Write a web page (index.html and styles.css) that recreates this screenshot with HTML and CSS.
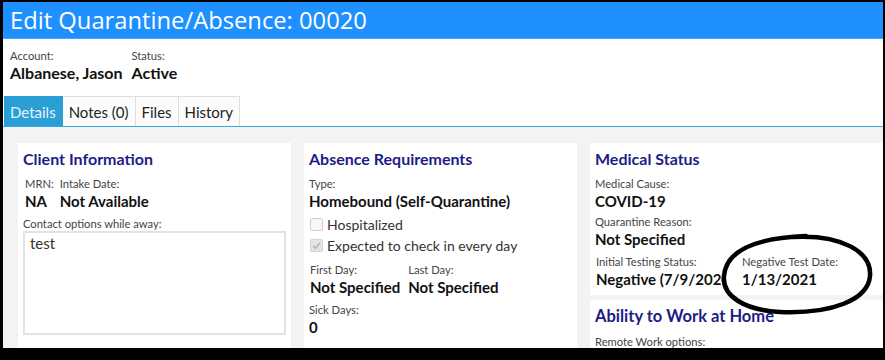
FILE: index.html
```html
<!DOCTYPE html>
<html lang="en">
<head>
    <meta charset="UTF-8">
    <meta name="viewport" content="width=device-width, initial-scale=1.0">
    <title>Edit Quarantine/Absence</title>
    <link rel="stylesheet" href="styles.css">
</head>
<body>
    <div class="window">
        <div class="title-bar">Edit Quarantine/Absence: 00020</div>

        <div class="summary">
            <div class="field">
                <div class="label">Account:</div>
                <div class="value">Albanese, Jason</div>
            </div>
            <div class="field">
                <div class="label">Status:</div>
                <div class="value">Active</div>
            </div>
        </div>

        <div class="tabs">
            <div class="tab active">Details</div>
            <div class="tab">Notes (0)</div>
            <div class="tab">Files</div>
            <div class="tab">History</div>
        </div>

        <div class="content">
            <div class="panel">
                <h3>Client Information</h3>
                <div class="pair small-gap">
                    <div class="field">
                        <div class="label">MRN:</div>
                        <div class="value">NA</div>
                    </div>
                    <div class="field">
                        <div class="label">Intake Date:</div>
                        <div class="value">Not Available</div>
                    </div>
                </div>
                <div class="label contact-label">Contact options while away:</div>
                <div class="textbox">test</div>
            </div>

            <div class="panel">
                <h3>Absence Requirements</h3>
                <div class="field">
                    <div class="label">Type:</div>
                    <div class="value">Homebound (Self-Quarantine)</div>
                </div>
                <div class="checks">
                    <div class="check"><span class="box"></span>Hospitalized</div>
                    <div class="check">
                        <span class="box on">
                            <svg width="11" height="11" viewBox="0 0 11 11"><path d="M2 5.8 L4.4 8.2 L9 2.8" fill="none" stroke="#b5b5b5" stroke-width="1.6"/></svg>
                        </span>Expected to check in every day
                    </div>
                </div>
                <div class="pair days">
                    <div class="field">
                        <div class="label">First Day:</div>
                        <div class="value">Not Specified</div>
                    </div>
                    <div class="field">
                        <div class="label">Last Day:</div>
                        <div class="value">Not Specified</div>
                    </div>
                </div>
                <div class="field sick">
                    <div class="label">Sick Days:</div>
                    <div class="value">0</div>
                </div>
            </div>

            <div class="stack">
                <div class="panel">
                    <h3>Medical Status</h3>
                    <div class="field">
                        <div class="label">Medical Cause:</div>
                        <div class="value">COVID-19</div>
                    </div>
                    <div class="field spaced">
                        <div class="label">Quarantine Reason:</div>
                        <div class="value">Not Specified</div>
                    </div>
                    <div class="pair testing">
                        <div class="field clip">
                            <div class="label">Initial Testing Status:</div>
                            <div class="value">Negative (7/9/2020)</div>
                        </div>
                        <div class="field">
                            <div class="label">Negative Test Date:</div>
                            <div class="value">1/13/2021</div>
                        </div>
                    </div>
                </div>
                <div class="panel">
                    <h3 class="big">Ability to Work at Home</h3>
                    <div class="label">Remote Work options:</div>
                </div>
            </div>
        </div>

        <!-- hand drawn circle around the test date -->
        <svg class="annotation" viewBox="3 2 880 346" width="880" height="346">
            <path d="M792 237 C842 234 872 252 870 276 C868 300 832 314 780 312 C744 310 722 296 724 276 C726 252 752 238 806 236"
                  fill="none" stroke="#000" stroke-width="4.5" stroke-linecap="round"/>
        </svg>
    </div>
</body>
</html>
```

FILE: styles.css
```css
body {
    margin: 0;
    background: #000;
    font-family: Lato, "Open Sans", Arial, sans-serif;
    color: #111;
}

.window {
    position: relative;
    display: flex;
    flex-direction: column;
    margin: 2px 2px 0 3px;
    height: 346px;
    background: #fff;
    overflow: hidden;
}

.title-bar {
    flex-shrink: 0;
    height: 36px;
    line-height: 36px;
    padding-left: 7px;
    background: #1e90ff;
    border-bottom: 1px solid #4aa6ff;
    color: #fff;
    font-family: "Open Sans", Arial, sans-serif;
    font-size: 23.75px;
    white-space: nowrap;
}

.summary {
    flex-shrink: 0;
    display: flex;
    gap: 9px;
    height: 57px;
    box-sizing: border-box;
    padding: 10px 0 0 7px;
}

.summary .value {
    font-size: 16px;
}

.label {
    font-size: 11.2px;
    line-height: 14px;
    color: #444;
    white-space: nowrap;
}

.value {
    font-size: 15px;
    line-height: 20px;
    font-weight: 700;
    color: #111;
    white-space: nowrap;
}

.tabs {
    flex-shrink: 0;
    display: flex;
    padding-left: 1px;
    border-bottom: 1px solid #3aa6e0;
}

.tab {
    height: 30px;
    line-height: 30px;
    padding: 0 6px;
    box-sizing: border-box;
    font-size: 15px;
    color: #222;
    background: #fcfcfc;
    border: 1px solid #dedede;
    border-bottom: none;
    border-left: none;
}

.tab.active {
    background: #2a9fd6;
    border-color: #2a9fd6;
    color: #e6f3fb;
}

.content {
    flex: 1;
    min-height: 0;
    display: grid;
    grid-template-columns: 273px 273px 1fr;
    column-gap: 13px;
    padding: 16px 0 0 15px;
    background: #f3f3f3;
}

.panel {
    background: #fff;
    padding: 6px 5px 6px 5px;
}

.stack {
    display: flex;
    flex-direction: column;
    gap: 5px;
}

.stack .panel:last-child {
    flex: 1;
}

h3 {
    margin: 0 0 8px;
    font-size: 16px;
    line-height: 20px;
    font-weight: 700;
    color: #1d1d85;
}

h3.big {
    font-size: 16.5px;
    margin-bottom: 9px;
}

.pair {
    display: flex;
}

.small-gap {
    gap: 6px;
    padding-left: 2px;
}

.contact-label {
    margin-top: 6px;
}

.textbox {
    height: 104px;
    box-sizing: border-box;
    border: 2px solid #e2e2e2;
    padding: 1px 5px;
    font-size: 15px;
    color: #333;
}

.checks {
    margin-top: 3px;
}

.check {
    display: flex;
    align-items: center;
    gap: 4px;
    height: 21px;
    font-size: 14px;
    color: #333;
}

.box {
    display: flex;
    align-items: center;
    justify-content: center;
    width: 13px;
    height: 13px;
    margin-left: 1px;
    box-sizing: border-box;
    border: 1px solid #cfcfcf;
    border-radius: 2px;
    background: #f8f8f8;
}

.box.on {
    background: #e4e4e4;
    border-color: #d4d4d4;
}

.days {
    gap: 8px;
    margin-top: 7px;
    padding-left: 1px;
}

.sick {
    margin-top: 6px;
}

.spaced {
    margin-top: 4px;
}

.testing {
    margin-top: 6px;
    padding-left: 1px;
}

.clip {
    width: 129px;
    overflow: hidden;
    margin-right: 17px;
}

.annotation {
    position: absolute;
    left: 0;
    top: 0;
    pointer-events: none;
}
```
